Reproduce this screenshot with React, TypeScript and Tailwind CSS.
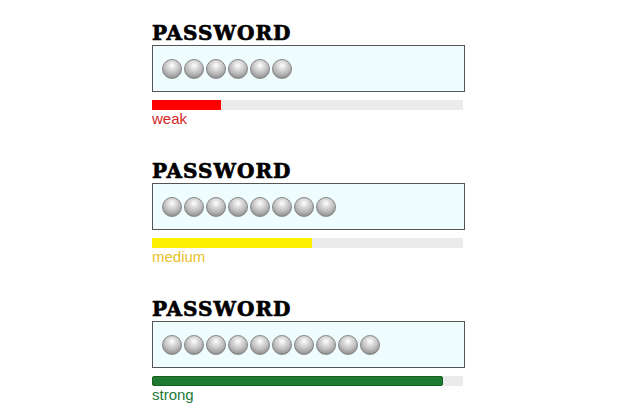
import React from "react";

type Strength = {
  count: number;
  fill: number;
  label: string;
  barClass: string;
  textClass: string;
};

const fields: Strength[] = [
  { count: 6, fill: 69, label: "weak", barClass: "bg-[#ff0000]", textClass: "text-[#d42626]" },
  { count: 8, fill: 160, label: "medium", barClass: "bg-[#fff200]", textClass: "text-[#e8c12a]" },
  { count: 10, fill: 291, label: "strong", barClass: "bg-[#1f7b31] rounded-[2px] border border-[#16601f]", textClass: "text-[#27773a]" },
];

function Bead() {
  return (
    <span
      className="block h-[20px] w-[20px] rounded-full border border-[#858585]"
      style={{
        background:
          "radial-gradient(circle at 50% 30%, #ffffff 0%, #e2e2e2 22%, #b9b9b9 55%, #8a8a8a 85%, #767676 100%)",
      }}
    />
  );
}

function PasswordField({ s }: { s: Strength }) {
  return (
    <div className="flex flex-col">
      <div
        className="h-[22px] text-[20px] leading-[22px] font-bold text-black tracking-[1px] [-webkit-text-stroke:0.7px_black]"
        style={{ fontFamily: '"DejaVu Serif", serif' }}
      >
        PASSWORD
      </div>
      <div className="mt-[1px] flex h-[47px] w-[313px] items-center gap-[2px] border border-[#555555] bg-[#f0fdff] pl-[9px]">
        {Array.from({ length: s.count }).map((_, i) => (
          <Bead key={i} />
        ))}
      </div>
      <div className="mt-[8px] h-[10px] w-[311px] bg-[#ebebeb]">
        <div className={`h-full ${s.barClass}`} style={{ width: s.fill }} />
      </div>
      <div
        className={`text-[15px] leading-[17px] ${s.textClass}`}
        style={{ fontFamily: '"Liberation Sans", Arial, sans-serif' }}
      >
        {s.label}
      </div>
    </div>
  );
}

export default function App() {
  return (
    <div className="h-[417px] w-[626px] bg-white pl-[152px] pt-[22px]">
      <div className="flex flex-col gap-[33px]">
        {fields.map((s) => (
          <PasswordField key={s.label} s={s} />
        ))}
      </div>
    </div>
  );
}
